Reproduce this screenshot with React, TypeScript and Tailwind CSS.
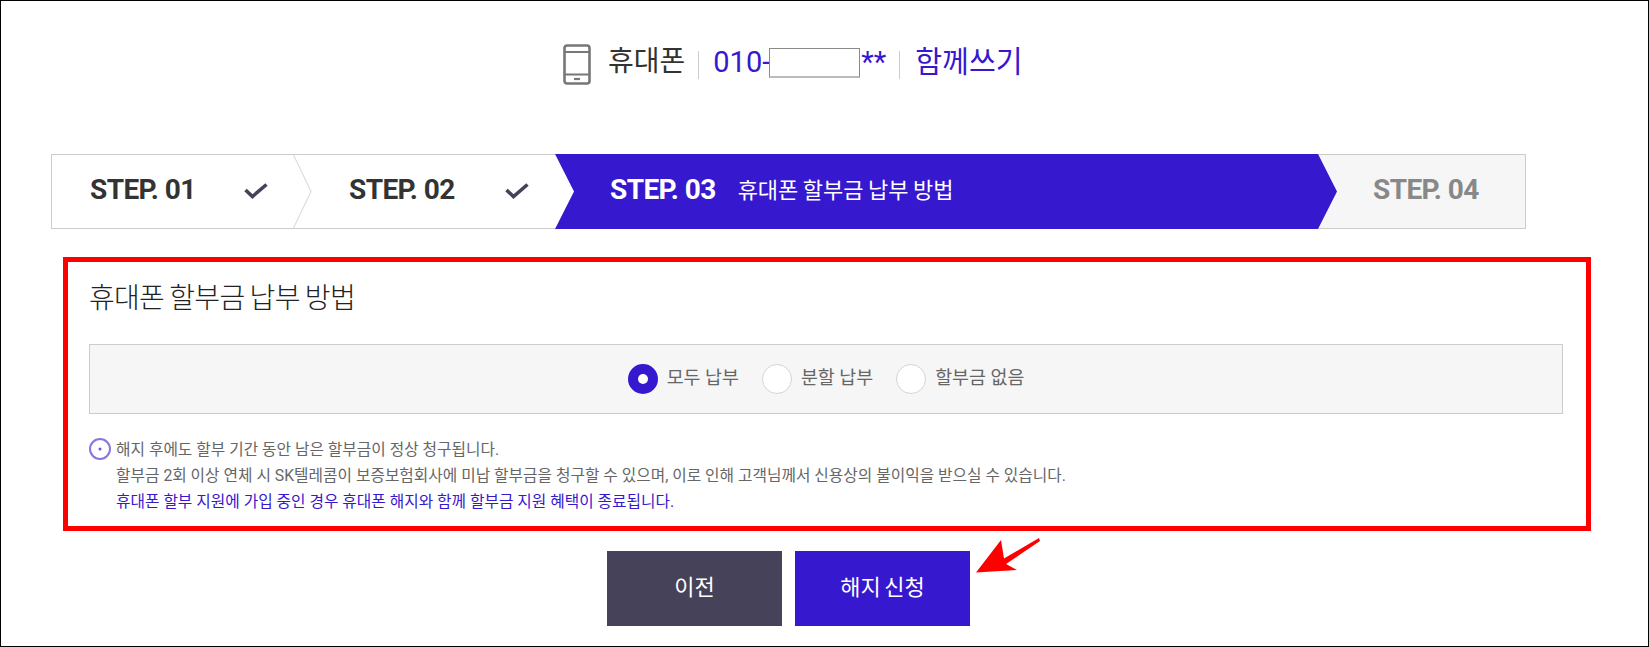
import React from 'react';

const kr = 'font-["Roboto","Noto_Sans_CJK_KR",sans-serif]';

const PhoneIcon = () => (
  <svg width="28" height="41" viewBox="0 0 28 41" fill="none" stroke="#777" strokeWidth="2.6">
    <rect x="1.5" y="1.5" width="25" height="38" rx="2.5" />
    <path d="M1.5 8H26.5M1.5 30.5H26.5" strokeWidth="2.2" />
    <path d="M11 35H17" strokeWidth="2.2" />
  </svg>
);

const Check = () => (
  <svg width="24" height="18" viewBox="0 0 24 18" fill="none" stroke="#45425a" strokeWidth="3.6">
    <path d="M1.5 8L8.5 14.5L22.5 2.5" />
  </svg>
);

const Chevron = () => (
  <svg className="absolute right-[-19px] top-0 z-[1]" width="19" height="73" viewBox="0 0 19 73" fill="none" stroke="#dddddd" strokeWidth="1.2">
    <path d="M0.5 0L18 36.5L0.5 73" />
  </svg>
);

const Radio = ({ label, checked }: { label: string; checked?: boolean }) => (
  <label className="flex items-center gap-[9px]">
    {checked ? (
      <span className="flex h-[30px] w-[30px] items-center justify-center rounded-full bg-[#3618ce]">
        <span className="h-[10px] w-[10px] rounded-full bg-white" />
      </span>
    ) : (
      <span className="h-[30px] w-[30px] rounded-full border border-[#d4d4d4] bg-white" />
    )}
    <span className="pb-[3px] text-[18.4px] text-[#666666]">{label}</span>
  </label>
);

export default function App() {
  return (
    <div className={`${kr} relative h-[647px] w-[1649px] border border-black bg-white text-[#333333]`}>
      {/* Top line */}
      <div className="flex h-[153px] pt-[43px] pl-[562px]">
        <div className="flex h-[41px] items-center">
          <PhoneIcon />
          <span className="mb-[6px] ml-[17px] text-[28px] leading-[36px] text-[#333333]">휴대폰</span>
          <span className="ml-[13px] mr-[14px] h-[28px] w-px bg-[#cccccc]" />
          <span className="mb-[6px] flex items-center text-[29px] leading-[36px] text-[#3618ce]">
            010-
            <span className="-ml-[1px] mr-[1px] mt-[2px] h-[30px] w-[91px] border border-b-2 border-[#8a8a8a] border-b-[#bbbbbb] bg-white" />
            **
          </span>
          <span className="ml-[13px] mr-[15px] h-[28px] w-px bg-[#cccccc]" />
          <span className="mb-[6px] text-[29.2px] leading-[36px] text-[#3618ce]">함께쓰기</span>
        </div>
      </div>

      {/* Steps */}
      <div className="ml-[50px] flex h-[75px] w-[1475px] border border-[#cccccc]">
        <div className="relative flex w-[241px] flex-none items-center bg-white pb-[3px] pl-[38px]">
          <span className="text-[28px] font-bold tracking-[-0.6px]">STEP. 01</span>
          <span className="ml-[48px] mt-[2px]"><Check /></span>
          <Chevron />
        </div>
        <div className="flex w-[262px] flex-none items-center bg-white pb-[3px] pl-[56px]">
          <span className="text-[28px] font-bold tracking-[-0.6px]">STEP. 02</span>
          <span className="ml-[50px] mt-[2px]"><Check /></span>
        </div>
        <div className="z-[2] -my-px mr-[-19px] flex w-[782px] flex-none items-center bg-[#3618ce] pb-[3px] pl-[55px] text-white [clip-path:polygon(0_0,calc(100%-19px)_0,100%_50%,calc(100%-19px)_100%,0_100%,19px_50%)]">
          <span className="text-[28px] font-bold tracking-[-0.6px]">STEP. 03</span>
          <span className="ml-[22px] text-[22px] [word-spacing:-1px]">휴대폰 할부금 납부 방법</span>
        </div>
        <div className="flex flex-1 items-center bg-[#f6f6f6] pb-[3px] pl-[55px]">
          <span className="text-[28px] font-bold tracking-[-0.6px] text-[#888888]">STEP. 04</span>
        </div>
      </div>

      {/* Highlighted section */}
      <section className="ml-[62px] mt-[28px] h-[274px] w-[1528px] border-[5px] border-[#ff0000] px-[21px]">
        <h2 className="mt-[17px] text-[28px] font-light leading-[40px] tracking-[-0.7px] text-[#222222] [word-spacing:-1px]">휴대폰 할부금 납부 방법</h2>
        <div className="mt-[25px] flex h-[70px] w-[1474px] items-center justify-center gap-[23px] border border-[#cccccc] bg-[#f6f6f6]">
          <Radio label="모두 납부" checked />
          <Radio label="분할 납부" />
          <Radio label="할부금 없음" />
        </div>
        <div className="mt-[23px] flex text-[15.75px] leading-[26px] text-[#666666]">
          <svg className="mt-[1px] mr-[5px] flex-none" width="22" height="22" viewBox="0 0 22 22" fill="none">
            <circle cx="11" cy="11" r="10" stroke="#8a74e4" strokeWidth="2" />
            <circle cx="11" cy="11" r="1.5" fill="#6a52dc" />
          </svg>
          <div>
            <p>해지 후에도 할부 기간 동안 남은 할부금이 정상 청구됩니다.</p>
            <p>할부금 2회 이상 연체 시 SK텔레콤이 보증보험회사에 미납 할부금을 청구할 수 있으며, 이로 인해 고객님께서 신용상의 불이익을 받으실 수 있습니다.</p>
            <p className="text-[#3618ce]">휴대폰 할부 지원에 가입 중인 경우 휴대폰 해지와 함께 할부금 지원 혜택이 종료됩니다.</p>
          </div>
        </div>
      </section>

      {/* Buttons */}
      <div className="mt-[20px] ml-[606px] flex gap-[13px]">
        <button className="h-[75px] w-[175px] bg-[#45425a] pb-[3px] text-[22px] text-white">이전</button>
        <button className="h-[75px] w-[175px] bg-[#3618ce] pb-[3px] text-[22px] text-white [word-spacing:-2px]">해지 신청</button>
      </div>

      {/* Red annotation arrow */}
      <svg className="absolute left-[973px] top-[535px]" width="70" height="40" viewBox="975 535 70 40" fill="#ff0000">
        <path d="M977 571.5L1002 539L1005 557.5L1040 537L1041 540L1007 563L1018 569Z" />
      </svg>
    </div>
  );
}
